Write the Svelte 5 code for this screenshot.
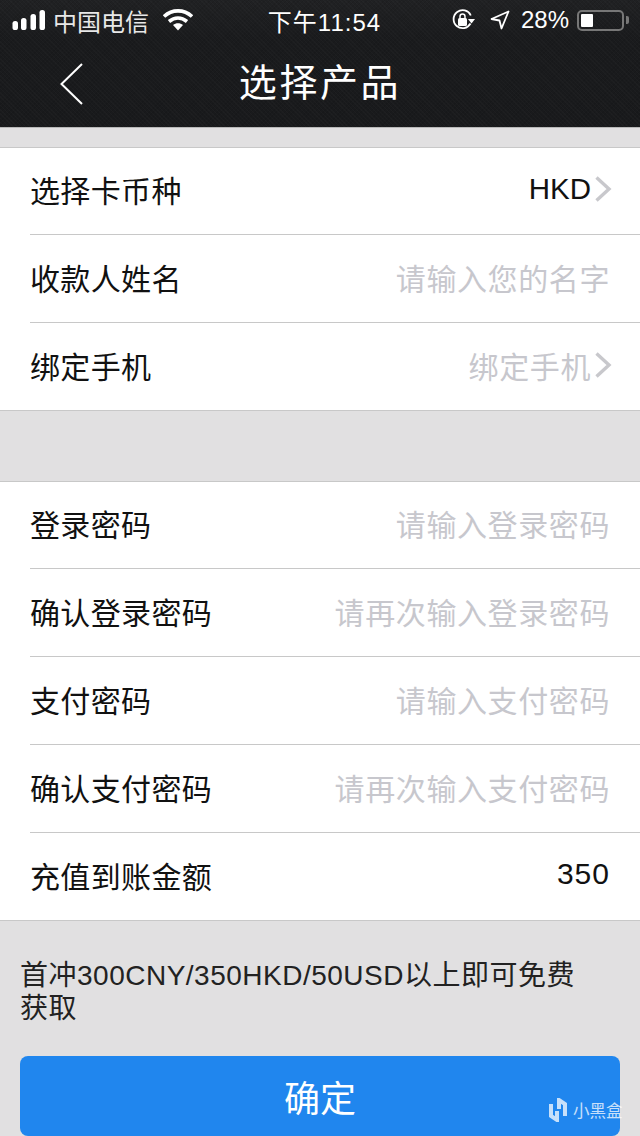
<script>
	const accountRows = [
		{ label: '选择卡币种', value: 'HKD', arrow: true },
		{ label: '收款人姓名', hint: '请输入您的名字' },
		{ label: '绑定手机', hint: '绑定手机', arrow: true }
	];
	const passwordRows = [
		{ label: '登录密码', hint: '请输入登录密码' },
		{ label: '确认登录密码', hint: '请再次输入登录密码' },
		{ label: '支付密码', hint: '请输入支付密码' },
		{ label: '确认支付密码', hint: '请再次输入支付密码' },
		{ label: '充值到账金额', value: '350', digits: true }
	];
</script>

{#snippet row(item)}
	<li class="row">
		<span class="label">{item.label}</span>
		<span class="right">
			{#if item.value}
				<span class={['value', item.digits && 'digits']}>{item.value}</span>
			{:else}
				<span class="hint">{item.hint}</span>
			{/if}
			{#if item.arrow}
				<svg class="arrow" width="18" height="26" viewBox="0 0 18 26">
					<path d="M2.5 1.5 L15 13 L2.5 24.5" fill="none" stroke="#c8c8cc" stroke-width="3.4" />
				</svg>
			{/if}
		</span>
	</li>
{/snippet}

<div class="page">
	<header class="top">
		<div class="status">
			<div class="status-left">
				<svg width="36" height="22" viewBox="0 0 36 22" fill="#fff">
					<rect x="0.5" y="12" width="5.5" height="9" rx="2.6" />
					<rect x="9" y="9" width="5.5" height="12" rx="2.6" />
					<rect x="18.5" y="5" width="5.5" height="16" rx="2.6" />
					<rect x="27.500" y="1" width="5.5" height="20" rx="2.6" />
				</svg>
				<span class="carrier">中国电信</span>
				<svg class="wifi" width="30" height="22" viewBox="0 0 30 22">
					<path d="M1 7.5 C9 0 21 0 29 7.5" fill="none" stroke="#fff" stroke-width="3.6" />
					<path d="M6 12.5 C11.500 8 18.500 8 24 12.5" fill="none" stroke="#fff" stroke-width="3.6" />
					<path d="M10 16 C13 13.500 17 13.500 20 16 L15 21.500 Z" fill="#fff" />
				</svg>
			</div>
			<span class="clock">下午11:54</span>
			<div class="status-right">
				<svg width="24" height="24" viewBox="0 0 24 24">
					<path d="M19.500 15.500 A9 9 0 1 1 19.800 7.500" fill="none" stroke="#fff" stroke-width="1.800" />
					<path d="M17 11 L24 11 L20.500 15.500 Z" fill="#fff" />
					<rect x="7" y="10" width="9" height="8" rx="1.500" fill="#fff" />
					<path d="M9 10.500 V8.500 A2.500 2.500 0 0 1 14 8.500 V10.500" fill="none" stroke="#fff" stroke-width="1.500" />
				</svg>
				<svg class="location" width="20" height="20" viewBox="0 0 20 20">
					<path d="M18.500 1.500 L1.500 9 L9.500 10.500 L11.500 18.500 Z" fill="none" stroke="#fff" stroke-width="1.800" stroke-linejoin="round" />
				</svg>
				<span class="percent">28%</span>
				<div class="battery"><div class="charge"></div></div>
				<div class="nub"></div>
			</div>
		</div>
		<div class="nav">
			<svg class="back" width="26" height="42" viewBox="0 0 26 42">
				<path d="M23 1 L2.500 21 L23 41" fill="none" stroke="#fff" stroke-width="2" />
			</svg>
			<h1>选择产品</h1>
		</div>
	</header>

	<ul class="group first">
		{#each accountRows as item}
			{@render row(item)}
		{/each}
	</ul>

	<ul class="group second">
		{#each passwordRows as item}
			{@render row(item)}
		{/each}
	</ul>

	<p class="notice">首冲300CNY/350HKD/50USD以上即可免费获取</p>

	<button class="confirm">确定</button>

	<div class="mark">
		<svg width="20" height="24" viewBox="0 0 20 24" fill="none" stroke="#fff" stroke-width="4">
			<path d="M3 6 V18 L9 22 V13" />
			<path d="M17 18 V6 L11 2 V11" />
		</svg>
		<span>小黑盒</span>
	</div>
</div>

<style>
	:global(body) {
		background: #e1e0e1;
	}

	.page {
		position: relative;
		width: 640px;
		height: 1136px;
		overflow: hidden;
		background: #e1e0e1;
		font-family: 'Liberation Sans', 'Noto Sans CJK SC', sans-serif;
		color: #111;
	}

	.top {
		height: 128px;
		box-sizing: border-box;
		background:
			repeating-linear-gradient(45deg, rgba(255, 255, 255, 0.018) 0 1px, transparent 1px 3px),
			repeating-linear-gradient(-45deg, rgba(0, 0, 0, 0.08) 0 1px, transparent 1px 3px),
			linear-gradient(#202123, #1a1b1d 30%, #191a1c);
		border-bottom: 1px solid #b8b8b8;
		color: #fff;
	}

	.status {
		height: 40px;
		display: grid;
		grid-template-columns: 1fr auto 1fr;
		align-items: center;
		padding: 0 11px 0 12px;
	}

	.status-left,
	.status-right {
		display: flex;
		align-items: center;
	}

	.status-right {
		justify-content: flex-end;
	}

	.carrier {
		margin-left: 5px;
		font-size: 24px;
		color: #e8e8e8;
	}

	.wifi {
		margin-left: 14px;
	}

	.clock {
		margin-left: 8px;
		font-size: 24px;
		letter-spacing: 1px;
	}

	.location {
		margin-left: 15px;
	}

	.percent {
		margin-left: 11px;
		font-size: 24px;
	}

	.battery {
		width: 47px;
		height: 21px;
		margin-left: 8px;
		box-sizing: border-box;
		padding: 2px;
		border: 2px solid #777;
		border-radius: 5px;
	}

	.charge {
		width: 12px;
		height: 100%;
		background: #fff;
		border-radius: 1px;
	}

	.nub {
		width: 3px;
		height: 8px;
		margin-left: 2px;
		background: #777;
		border-radius: 0 2px 2px 0;
	}

	.nav {
		position: relative;
		height: 87px;
		display: flex;
		align-items: center;
		justify-content: center;
	}

	.back {
		position: absolute;
		left: 59px;
		top: 23px;
	}

	h1 {
		margin: 0 0 8px;
		font-size: 38px;
		font-weight: 400;
		letter-spacing: 2.6px;
	}

	.group {
		list-style: none;
		margin: 0;
		padding: 0;
		background: #fff;
		border-top: 1px solid #c8c8c8;
		border-bottom: 1px solid #c8c8c8;
	}

	.first {
		margin-top: 19px;
	}

	.second {
		margin-top: 70px;
	}

	.row {
		box-sizing: border-box;
		height: 88px;
		margin-left: 30px;
		padding: 0 30px 4px 0;
		display: flex;
		align-items: center;
		justify-content: space-between;
		border-bottom: 1px solid #c8c8c8;
	}

	.row:first-child {
		height: 87px;
	}

	.row:last-child {
		height: 87px;
		border-bottom: 0;
	}

	.label {
		font-size: 30px;
		letter-spacing: 0.35px;
	}

	.right {
		display: flex;
		align-items: center;
		font-size: 30px;
	}

	.value {
		font-size: 29.5px;
		color: #111;
	}

	.digits {
		font-size: 30px;
		letter-spacing: 1px;
		margin-bottom: 1px;
	}

	.hint {
		color: #c7c7cd;
		letter-spacing: 0.6px;
	}

	.arrow {
		margin-left: 3px;
		margin-right: -2px;
	}

	.notice {
		margin: 38px 50px 0 20px;
		font-size: 28px;
		line-height: 33px;
		letter-spacing: 0.5px;
		color: #222;
	}

	.confirm {
		display: block;
		width: 600px;
		height: 80px;
		margin: 31px 20px 0;
		border: 0;
		border-radius: 8px;
		background: #2086ee;
		color: #fff;
		font: inherit;
		font-size: 36px;
		padding: 0;
	}

	.mark {
		position: absolute;
		left: 548px;
		top: 1098px;
		display: flex;
		align-items: center;
		gap: 5px;
		color: #fff;
		opacity: 0.75;
		font-size: 16.5px;
	}
</style>
